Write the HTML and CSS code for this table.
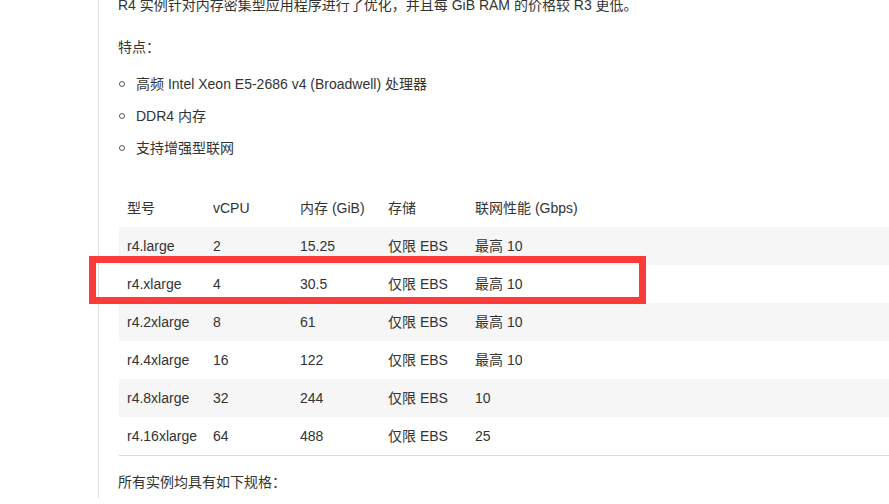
FILE: index.html
```html
<!DOCTYPE html>
<html lang="zh-CN">
<head>
<meta charset="utf-8">
<title>R4</title>
<link rel="stylesheet" href="styles.css">
</head>
<body>
<div class="page">
  <div class="content">
    <p class="lead">R4 实例针对内存密集型应用程序进行了优化，并且每 GiB RAM 的价格较 R3 更低。</p>
    <p>特点：</p>
    <ul class="features">
      <li>高频 Intel Xeon E5-2686 v4 (Broadwell) 处理器</li>
      <li>DDR4 内存</li>
      <li>支持增强型联网</li>
    </ul>
    <div class="table-wrap">
      <table class="specs">
        <colgroup>
          <col class="c1"><col class="c2"><col class="c3"><col class="c4"><col class="c5">
        </colgroup>
        <thead>
          <tr><th>型号</th><th>vCPU</th><th>内存 (GiB)</th><th>存储</th><th>联网性能 (Gbps)</th></tr>
        </thead>
        <tbody>
          <tr><td>r4.large</td><td>2</td><td>15.25</td><td>仅限 EBS</td><td>最高 10</td></tr>
          <tr><td>r4.xlarge</td><td>4</td><td>30.5</td><td>仅限 EBS</td><td>最高 10</td></tr>
          <tr><td>r4.2xlarge</td><td>8</td><td>61</td><td>仅限 EBS</td><td>最高 10</td></tr>
          <tr><td>r4.4xlarge</td><td>16</td><td>122</td><td>仅限 EBS</td><td>最高 10</td></tr>
          <tr><td>r4.8xlarge</td><td>32</td><td>244</td><td>仅限 EBS</td><td>10</td></tr>
          <tr><td>r4.16xlarge</td><td>64</td><td>488</td><td>仅限 EBS</td><td>25</td></tr>
        </tbody>
      </table>
      <div class="highlight"></div>
    </div>
    <p>所有实例均具有如下规格：</p>
  </div>
</div>
</body>
</html>
```

FILE: styles.css
```css
html, body {
  margin: 0;
  padding: 0;
  background: #ffffff;
}
body {
  font-family: "Liberation Sans", "Noto Sans CJK SC", sans-serif;
  font-size: 14px;
  color: #333333;
  overflow: hidden;
  height: 504px;
}
.page {
  margin-left: 98px;
  border-left: 1px solid #d9e0df;
  min-height: 504px;
}
.content {
  padding-left: 19px;
  margin-top: -6px;
}
p {
  margin: 0 0 15px 0;
  line-height: 22px;
}
.lead {
  margin-bottom: 20px;
}
.features {
  list-style: none;
  margin: 0;
  padding: 0;
}
.features li {
  position: relative;
  line-height: 22px;
  margin-bottom: 10px;
  padding-left: 18px;
}
.features li::before {
  content: "";
  position: absolute;
  left: 1px;
  top: 8px;
  width: 4px;
  height: 4px;
  border: 1px solid #555;
  border-radius: 50%;
}
.table-wrap {
  position: relative;
  margin-top: 30px;
  margin-left: 1px;
  margin-bottom: 15px;
}
.specs {
  border-collapse: collapse;
  table-layout: fixed;
  width: 770px;
  border-bottom: 1px solid #dddddd;
}
.c1 { width: 86px; }
.c2 { width: 87px; }
.c3 { width: 88px; }
.c4 { width: 87px; }
.specs th,
.specs td {
  height: 38px;
  padding: 0 0 0 8px;
  text-align: left;
  font-weight: normal;
  line-height: 38px;
  white-space: nowrap;
  box-sizing: border-box;
}
.specs tbody tr:nth-child(odd) {
  background: #f6f6f6;
}
.highlight {
  position: absolute;
  left: -30px;
  top: 67px;
  width: 557px;
  height: 48px;
  border: 7px solid #fc3a3a;
  box-sizing: border-box;
}
```
